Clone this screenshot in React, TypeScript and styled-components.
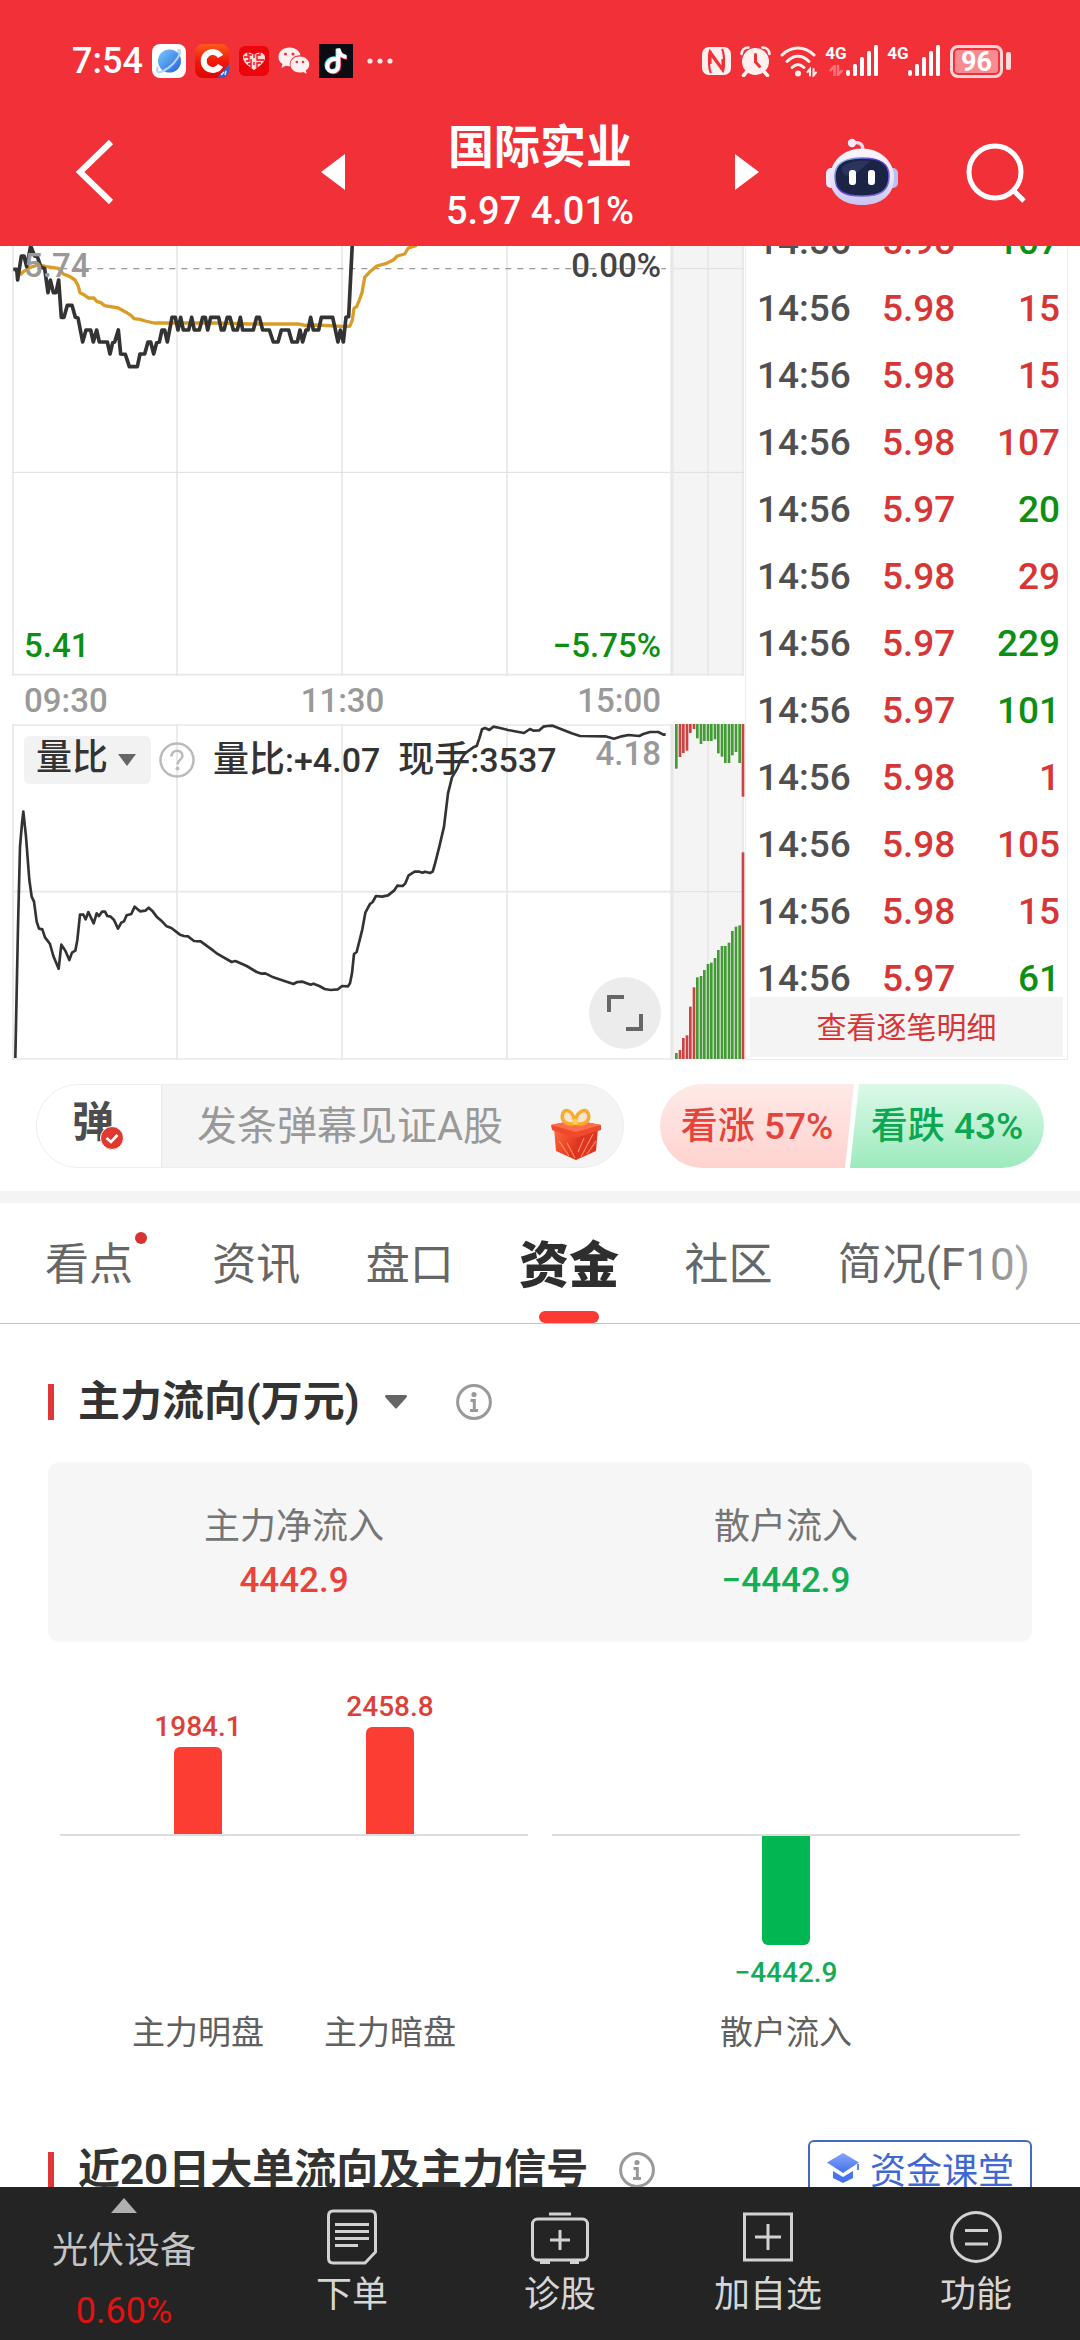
import React from "react";
import styled, { createGlobalStyle } from "styled-components";

const RED = "#f13037";
const UP = "#d63636";
const DOWN = "#0d8f12";

const GlobalStyle = createGlobalStyle`
  * { box-sizing: border-box; }
  body {
    margin: 0;
    background: #fff;
    color: #333;
    font-family: Roboto, "Noto Sans CJK SC", sans-serif;
  }
  button, input, select {
    margin: 0;
    padding: 0;
    border: 0;
    background: none;
    color: inherit;
    font: inherit;
  }
  svg { display: block; flex: none; }
`;

const Screen = styled.div`
  display: flex;
  flex-direction: column;
  height: 100vh;
`;

/* ---------- header ---------- */

const Header = styled.header`
  flex: none;
  background: ${RED};
  color: #fff;
`;

const StatusBar = styled.div`
  display: flex;
  justify-content: space-between;
  align-items: center;
  height: 98px;
  padding: 24px 69px 0 72px;
`;

const StatusGroup = styled.div`
  display: flex;
  align-items: center;
  gap: 9px;
`;

const Clock = styled.span`
  font-size: 36px;
  font-weight: 500;
  line-height: 40px;
`;

const TitleBar = styled.div`
  display: grid;
  grid-template-columns: 1fr auto 1fr;
  align-items: center;
  height: 148px;
  padding: 0 54px 0 76px;
`;

const IconButton = styled.button`
  display: flex;
  align-items: center;
  justify-content: center;
`;

const BackButton = styled(IconButton)`
  justify-self: start;
`;

const Switcher = styled.div`
  display: flex;
  align-items: center;
  justify-content: space-between;
  width: 438px;
  margin-right: 22px;
`;

const StockTitle = styled.h1`
  display: flex;
  flex-direction: column;
  align-items: center;
  margin: 0;
  padding-top: 14px;
  font-size: 46px;
  font-weight: 700;
  line-height: 64px;
`;

const StockQuote = styled.span`
  font-size: 38px;
  font-weight: 500;
  line-height: 64px;
`;

const HeaderActions = styled.div`
  display: flex;
  align-items: center;
  justify-content: flex-end;
  gap: 66px;
`;

/* ---------- quote area ---------- */

const Main = styled.main`
  flex: 1;
  min-height: 0;
  overflow-y: auto;
  scrollbar-width: none;
`;

const QuoteArea = styled.section`
  display: grid;
  grid-template-columns: minmax(0, 733fr) minmax(0, 323fr);
  padding: 0 12px;
`;

const ChartStack = styled.div`
  display: grid;
  & > * { grid-area: 1 / 1; }
`;

const Plot = styled.svg`
  width: 100%;
`;

const PlotLabels = styled.div<{ $top: number; $bottom: number }>`
  display: flex;
  flex-direction: column;
  justify-content: space-between;
  padding: ${(p) => p.$top}px 84px ${(p) => p.$bottom}px 12px;
`;

const LabelRow = styled.div`
  display: flex;
  justify-content: space-between;
`;

const AxisText = styled.span<{ $color: string }>`
  color: ${(p) => p.$color};
  font-size: 33px;
  font-weight: 500;
  line-height: 36px;
`;

const TimeAxis = styled.div`
  display: flex;
  align-items: center;
  justify-content: space-between;
  height: 48px;
  padding: 2px 84px 0 12px;
`;

const IndicatorRow = styled.div`
  display: flex;
  align-items: center;
  height: 48px;
`;

const ChipSelect = styled.span`
  display: grid;
  align-items: center;
  height: 48px;
  border-radius: 6px;
  background: #f2f2f2;
  & > * { grid-area: 1 / 1; }
  & > svg { justify-self: end; margin-right: 15px; pointer-events: none; }
`;

const Select = styled.select`
  appearance: none;
  outline: none;
`;

const IndicatorSelect = styled(Select)`
  padding: 0 42px 3px 12px;
  font-size: 36px;
  font-weight: 500;
  line-height: 45px;
`;

const TitleSelect = styled(Select)`
  padding-right: 47px;
  font-size: 42px;
  font-weight: 700;
  line-height: 60px;
`;

const HelpButton = styled(IconButton)`
  margin: 0 18px 0 8px;
`;

const Reading = styled.span`
  margin-right: 18px;
  font-size: 36px;
  font-weight: 500;
  line-height: 48px;
  white-space: nowrap;
`;

const ReadingValue = styled.span`
  font-size: 34px;
`;

const PeakText = styled(AxisText)`
  align-self: flex-start;
  margin-left: auto;
`;

const ExpandButton = styled(IconButton)`
  align-self: flex-end;
  width: 72px;
  height: 72px;
  border-radius: 50%;
  background: #ececec;
`;

const TickPanel = styled.div`
  display: flex;
  flex-direction: column;
  border: solid #ececec;
  border-width: 0 1px 1px;
  padding: 0 4px 2px;
`;

const TickList = styled.div`
  display: flex;
  flex-direction: column;
  justify-content: flex-end;
  flex: 1 0 auto;
  height: 0;
  overflow: hidden;
`;

const TickTable = styled.table`
  flex: none;
  width: 100%;
  border-collapse: collapse;
  font-size: 37px;
  font-weight: 500;
  line-height: 36px;
`;

const TickCell = styled.td<{ $color: string; $align?: string }>`
  height: 67px;
  padding: 0 3px 0 7px;
  color: ${(p) => p.$color};
  text-align: ${(p) => p.$align ?? "left"};
  vertical-align: bottom;
`;

const TickMore = styled.button`
  flex: none;
  height: 60px;
  padding-bottom: 4px;
  background: #f4f4f4;
  color: ${UP};
  font-size: 30px;
`;

/* ---------- comment bar ---------- */

const CommentBar = styled.section`
  display: grid;
  grid-template-columns: minmax(0, 588fr) minmax(0, 384fr);
  gap: 36px;
  padding: 24px 36px 23px;
`;

const CommentBox = styled.div`
  display: flex;
  align-items: stretch;
  height: 84px;
  border: 1px solid #ededed;
  border-radius: 42px;
  overflow: hidden;
  background: #f4f4f4;
`;

const BarrageToggle = styled.button`
  display: flex;
  align-items: center;
  justify-content: center;
  flex: none;
  width: 125px;
  padding: 0 2px 6px 0;
  border-right: 1px solid #e8e8e8;
  background: #fff;
  color: #4d4d4d;
  font-size: 42px;
  font-weight: 700;
  line-height: 60px;
  & > svg { margin: 30px 0 0 -14px; }
`;

const CommentInput = styled.input`
  flex: 1;
  min-width: 0;
  padding-left: 35px;
  outline: none;
  font-size: 40px;
  &::placeholder { color: #999; opacity: 1; }
`;

const GiftButton = styled(IconButton)`
  padding: 16px 22px 0 0;
`;

const VoteBar = styled.div`
  display: flex;
  height: 84px;
  border-radius: 42px;
  overflow: hidden;
`;

const VoteButton = styled.button<{ $up?: boolean }>`
  flex: 1;
  margin-left: ${(p) => (p.$up ? 0 : -4)}px;
  padding-bottom: 6px;
  background: ${(p) =>
    p.$up
      ? "linear-gradient(#feeae8, #fed3cf)"
      : "linear-gradient(#dcf9e8, #9ceabd)"};
  clip-path: ${(p) =>
    p.$up
      ? "polygon(0 0, 100% 0, calc(100% - 9px) 100%, 0 100%)"
      : "polygon(9px 0, 100% 0, 100% 100%, 0 100%)"};
  color: ${(p) => (p.$up ? "#e4443b" : "#0ca750")};
  font-size: 37px;
  font-weight: 500;
  white-space: nowrap;
`;

/* ---------- tabs ---------- */

const Tabs = styled.nav`
  position: relative;
  display: flex;
  align-items: stretch;
  justify-content: space-between;
  height: 133px;
  padding: 0 50px 0 45px;
  border-top: 12px solid #f4f4f4;
  border-bottom: 1px solid #c4c4c4;
  &::after {
    content: "";
    position: absolute;
    top: 0;
    right: 0;
    bottom: 0;
    width: 130px;
    background: linear-gradient(90deg, rgba(255, 255, 255, 0), rgba(255, 255, 255, 0.8));
    pointer-events: none;
  }
`;

const Tab = styled.button<{ $active?: boolean; $dot?: boolean }>`
  position: relative;
  padding: 0 ${(p) => (p.$dot ? 14 : 0)}px 4px 0;
  color: ${(p) => (p.$active ? "#2e2e2e" : "#666")};
  font-size: ${(p) => (p.$active ? 50 : 44)}px;
  font-weight: ${(p) => (p.$active ? 900 : 400)};
  white-space: nowrap;
  &::before {
    content: "";
    display: ${(p) => (p.$dot ? "block" : "none")};
    position: absolute;
    top: 29px;
    right: 0;
    width: 12px;
    height: 12px;
    border-radius: 50%;
    background: #d93232;
  }
  &::after {
    content: "";
    display: ${(p) => (p.$active ? "block" : "none")};
    position: absolute;
    bottom: 0;
    left: 50%;
    width: 60px;
    height: 12px;
    margin-left: -30px;
    border-radius: 6px;
    background: #fb3b33;
  }
`;

/* ---------- capital flow ---------- */

const Section = styled.section`
  padding: 48px 48px 0;
`;

const SectionHead = styled.div`
  display: flex;
  align-items: center;
  height: 60px;
  &::before {
    content: "";
    width: 6px;
    height: 36px;
    margin-right: 24px;
    background: #e03636;
  }
`;

const SectionTitle = styled.h2`
  margin: 0 31px 0 0;
  font-size: 42px;
  font-weight: 700;
  line-height: 60px;
  white-space: nowrap;
`;

const TitlePicker = styled.span`
  display: grid;
  align-items: center;
  margin-right: 49px;
  & > * { grid-area: 1 / 1; }
  & > svg { justify-self: end; pointer-events: none; }
`;

const Summary = styled.dl`
  display: grid;
  grid-template-columns: 1fr 1fr;
  margin: 30px 0 0;
  padding: 39px 0 35px;
  border-radius: 12px;
  background: #f6f6f6;
  text-align: center;
`;

const SummaryLabel = styled.dt`
  color: #757575;
  font-size: 36px;
  line-height: 53px;
`;

const SummaryValue = styled.dd<{ $color: string }>`
  margin: 0;
  color: ${(p) => p.$color};
  font-size: 35px;
  font-weight: 500;
  line-height: 53px;
`;

const BarCharts = styled.div`
  display: grid;
  grid-template-columns: 1fr 1fr;
  gap: 24px;
  padding: 0 12px;
`;

const BarGroup = styled.div<{ $columns: number }>`
  display: grid;
  grid-template-rows: 192px 2px 175px 44px;
  grid-template-columns: repeat(${(p) => p.$columns}, 1fr);
  padding: 0 42px;
`;

const AxisLine = styled.div`
  grid-row: 2;
  grid-column: 1 / -1;
  margin: 0 -42px;
  background: #dcdcdc;
`;

const BarSlot = styled.div<{ $row: number }>`
  grid-row: ${(p) => p.$row};
  display: flex;
  flex-direction: column;
  align-items: center;
  justify-content: ${(p) => (p.$row === 1 ? "flex-end" : "flex-start")};
`;

const Bar = styled.div<{ $up?: boolean }>`
  width: 48px;
  border-radius: ${(p) => (p.$up ? "6px 6px 0 0" : "0 0 6px 6px")};
  background: ${(p) => (p.$up ? "#fc3d33" : "#02b651")};
`;

const BarValue = styled.span<{ $up?: boolean }>`
  margin-top: ${(p) => (p.$up ? 0 : 8)}px;
  color: ${(p) => (p.$up ? "#dc4037" : "#14ab54")};
  font-size: 28px;
  font-weight: 500;
  line-height: 40px;
`;

const BarName = styled.span`
  grid-row: 4;
  color: #606060;
  font-size: 33px;
  line-height: 44px;
  text-align: center;
`;

const NextHead = styled(SectionHead)`
  margin-top: 85px;
`;

const CourseLink = styled.a`
  display: flex;
  align-items: center;
  justify-content: center;
  gap: 10px;
  height: 60px;
  margin-left: auto;
  padding: 0 16px 4px;
  border: 2px solid #4468c4;
  border-radius: 6px;
  color: #4068d4;
  font-size: 36px;
  text-decoration: none;
  white-space: nowrap;
`;

/* ---------- bottom bar ---------- */

const BottomBar = styled.nav`
  flex: none;
  display: grid;
  grid-template-columns: 248fr 208fr 208fr 208fr 208fr;
  height: 153px;
  background: #242424;
`;

const BottomItem = styled.button`
  display: flex;
  flex-direction: column;
  align-items: center;
  padding-top: 22px;
  color: #d6d6d6;
  font-size: 36px;
  line-height: 60px;
`;

const SectorItem = styled(BottomItem)`
  padding-top: 11px;
  color: #c4c4c4;
`;

const SectorName = styled.span`
  margin-top: 8px;
  line-height: 60px;
`;

const SectorChange = styled.span`
  color: #e01212;
  line-height: 60px;
`;

/* ---------- data ---------- */

const ticks: [string, string, boolean][] = [
  ["5.98", "107", false],
  ["5.98", "15", true],
  ["5.98", "15", true],
  ["5.98", "107", true],
  ["5.97", "20", false],
  ["5.98", "29", true],
  ["5.97", "229", false],
  ["5.97", "101", false],
  ["5.98", "1", true],
  ["5.98", "105", true],
  ["5.98", "15", true],
  ["5.97", "61", false],
];

const upperDepth = [326, 291, 279, 272, 219, 207, 235, 252, 243, 243, 243, 238, 280, 290, 309, 309, 286, 276, 309, 410];
const lowerDepth = [1179, 1170, 1134, 1126, 1040, 982, 952, 948, 930, 912, 908, 894, 870, 858, 858, 848, 813, 800, 796, 577];
const depthColor = (i: number) => ((i > 0 && i < 6) || i === 19 ? "#cb4343" : "#449a35");
const depthX = (i: number) => Math.round(2025 + i * 10.53);

const tabs = [
  { name: "看点", dot: true },
  { name: "资讯" },
  { name: "盘口" },
  { name: "资金", active: true },
  { name: "社区" },
  { name: "简况(F10)" },
];

/* ---------- drawings ---------- */

const Triangle = ({ w, h, d, fill }: { w: number; h: number; d: string; fill: string }) => (
  <svg width={w} height={h} viewBox={`0 0 ${w} ${h}`}>
    <path d={d} fill={fill} />
  </svg>
);

const InfoIcon = () => (
  <svg width="36" height="36" viewBox="0 0 36 36" fill="none" stroke="#999" strokeWidth="3">
    <circle cx="18" cy="18" r="16.4" />
    <circle cx="18" cy="10.5" r="2.6" fill="#999" stroke="none" />
    <path d="M14.5 16.5H18.3V26M14 26.5H22" />
  </svg>
);

const Signal = () => (
  <svg width="33" height="32" viewBox="0 0 33 32" fill="#fff">
    <rect x="0" y="25" width="4" height="6" rx="2" />
    <rect x="7" y="19" width="4" height="12" rx="1.5" />
    <rect x="14" y="12" width="4" height="19" rx="1.5" />
    <rect x="21" y="6" width="4" height="25" rx="1.5" />
    <rect x="28" y="0" width="4" height="31" rx="1.5" />
  </svg>
);

const Network = styled.span`
  display: flex;
  align-items: flex-start;
  font-size: 17px;
  font-weight: 700;
  line-height: 16px;
`;

const NetworkType = styled.span`
  display: flex;
  flex-direction: column;
  align-items: center;
  gap: 4px;
  width: 20px;
`;

const BatteryBody = styled.span`
  display: flex;
  align-items: center;
  gap: 3px;
  &::after {
    content: "";
    width: 5px;
    height: 18px;
    border-radius: 2px;
    background: #ffdadb;
  }
`;

const BatteryLevel = styled.span`
  width: 53px;
  height: 33px;
  border: 3px solid #ffd6d8;
  border-radius: 8px;
  background: #f88b8f;
  background-clip: content-box;
  padding: 2px;
  font-size: 27px;
  font-weight: 700;
  line-height: 24px;
  text-align: center;
`;

const BrowserIcon = () => (
  <svg width="34" height="34" viewBox="0 0 34 34">
    <defs>
      <linearGradient id="globe" x1="0" y1="0" x2="1" y2="1">
        <stop offset="0" stopColor="#7cc9fb" />
        <stop offset="1" stopColor="#1f62dc" />
      </linearGradient>
    </defs>
    <rect width="34" height="34" rx="8" fill="#fff" />
    <path d="M25 6C28 4 30 5 28.500 10L26 15Z" fill="#c5d6f4" />
    <circle cx="17.500" cy="17" r="11.500" fill="url(#globe)" />
    <path d="M6 23C3.500 28.500 6 29.500 11 27C19 23.500 26 15.500 28.500 8" fill="none" stroke="#b7d3fa" strokeWidth="2" />
  </svg>
);

const CIcon = () => (
  <svg width="35" height="34" viewBox="0 0 35 34">
    <defs>
      <linearGradient id="cbg" x1="0" y1="0" x2="0" y2="1">
        <stop offset="0" stopColor="#fb5a1c" />
        <stop offset="0.500" stopColor="#f01a0a" />
        <stop offset="1" stopColor="#dc0505" />
      </linearGradient>
    </defs>
    <rect width="34" height="34" rx="8" fill="url(#cbg)" />
    <path d="M25.500 12.500A9 9 0 1 0 25.500 21.500" fill="none" stroke="#fff" strokeWidth="6" />
    <path d="M34 20V26A8 8 0 0 1 26 34H22Z" fill="#3a5fc4" />
    <path d="M26 31L29 28M30 31L31 27" stroke="#dfe6ff" strokeWidth="1.500" />
  </svg>
);

const HeartIcon = () => (
  <svg width="30" height="30" viewBox="0 0 30 30">
    <rect width="30" height="30" rx="6" fill="#ee040c" />
    <path d="M15 24C9 20 4 16 4 11.500C4 7 10 4 15 9C20 4 26 7 26 11.500C26 16 21 20 15 24Z" fill="#ffd9d9" />
    <path d="M5 11H10V15H7M9 6V9H13M15 9V12M21 6V9H18V14H25M12 13V18H9M12 22V18M18 22V17H22M15 16V19" fill="none" stroke="#ee040c" strokeWidth="1.300" />
  </svg>
);

const WechatIcon = () => (
  <svg width="32" height="28" viewBox="0 0 32 28">
    <path d="M11.500 0.500C5 0.500 0.500 4.500 0.500 10C0.500 13 2 15.500 4.500 17L3.500 21L7.500 18.800C9 19.200 10.500 19.300 12 19.200C10.500 13 16 8 22.500 8.300C21.500 3.500 17 0.500 11.500 0.500Z" fill="#fff0f0" />
    <path d="M21.800 9.500C16.500 9.500 12.500 13 12.500 17.500C12.500 22 16.500 25.500 21.800 25.500C23 25.500 24.200 25.300 25.300 24.900L28.600 26.800L27.800 23.500C30 22 31.300 20 31.300 17.500C31.300 13 27 9.500 21.800 9.500Z" fill="#fff0f0" />
    <g fill={RED}>
      <circle cx="7.500" cy="7" r="1.500" />
      <circle cx="15" cy="7" r="1.500" />
      <circle cx="18.800" cy="15" r="1.300" />
      <circle cx="25" cy="15" r="1.300" />
    </g>
  </svg>
);

const NoteIcon = () => (
  <svg width="34" height="34" viewBox="0 0 34 34">
    <rect width="34" height="34" fill="#0c0b14" />
    <g fill="none" strokeWidth="4">
      <path d="M17 14.500C11.500 13.500 7.500 17 7.500 21.500C7.500 28.500 18.500 29 18.500 21.500V5C19.500 9.500 22 12 26.500 12.300" stroke="#2fe9e4" />
      <path d="M18.500 16C13 15 9 18.500 9 23C9 30 20 30 20 22.500V6C21 10.500 23.500 13.500 28 13.800" stroke="#f8305a" />
      <path d="M17.800 15.300C12.300 14.300 8.300 17.800 8.300 22.300C8.300 29.300 19.300 29.300 19.300 22V4.500C20.300 10 23 12.800 27.500 13" stroke="#fff" />
    </g>
  </svg>
);

const MoreDots = () => (
  <svg width="32" height="6" viewBox="0 0 32 6" fill="#ffe9e9">
    <circle cx="8" cy="3" r="2.600" />
    <circle cx="18" cy="3" r="2.600" />
    <circle cx="28" cy="3" r="2.600" />
  </svg>
);

const NfcIcon = () => (
  <svg width="29" height="28" viewBox="0 0 29 28">
    <rect width="29" height="28" rx="7" fill="#fff0f0" />
    <path d="M9 26C6.500 22 6.500 8 8 4L20.500 22V12M20 2C22.500 6 22.500 20 21 24L8.500 7V17" fill="none" stroke={RED} strokeWidth="2.200" />
  </svg>
);

const AlarmIcon = () => (
  <svg width="31" height="31" viewBox="0 0 31 31">
    <circle cx="15.500" cy="15.500" r="13.500" fill="#fff0f0" />
    <path d="M6.500 26L3.500 29.500M24.500 26L27.500 29.500" stroke="#fff0f0" strokeWidth="3.500" strokeLinecap="round" />
    <path d="M1.500 8C2 4 4.500 1.500 8.500 1.500M22.500 1.500C26.500 1.500 29 4 29.500 8" fill="none" stroke="#fff0f0" strokeWidth="2.600" strokeLinecap="round" />
    <path d="M15.500 8.500V16L19.500 20.500" fill="none" stroke={RED} strokeWidth="3" strokeLinecap="round" />
  </svg>
);

const WifiIcon = () => (
  <svg width="37" height="31" viewBox="0 0 37 31" fill="none" stroke="#fff0f0" strokeWidth="3" strokeLinecap="round">
    <path d="M2 9C11 -0.500 25 -0.500 34 9" />
    <path d="M7 15.500C13.500 8.500 22.500 8.500 29 15.500" />
    <path d="M12 21.500C16 17.500 20 17.500 24 21.500" />
    <circle cx="18" cy="27.500" r="3" fill="#fff0f0" stroke="none" />
    <path d="M30 29.500V23L27.500 26M33.500 23V29.500L36 26.500" strokeWidth="2" />
  </svg>
);

const ArrowsIcon = () => (
  <svg width="14" height="11" viewBox="0 0 14 11" fill="none" stroke="#fb7479" strokeWidth="2.500">
    <path d="M5.500 11V1L1 6M9 0V10L13.500 5" />
  </svg>
);

const RobotIcon = () => (
  <svg width="72" height="68" viewBox="0 0 72 68">
    <defs>
      <linearGradient id="shell" x1="0" y1="0" x2="0" y2="1">
        <stop offset="0" stopColor="#fff6fa" />
        <stop offset="0.600" stopColor="#e4e1fb" />
        <stop offset="1" stopColor="#c9c2f0" />
      </linearGradient>
      <linearGradient id="rim" x1="0" y1="0" x2="1" y2="1">
        <stop offset="0" stopColor="#8be6ee" />
        <stop offset="0.400" stopColor="#5b35d8" />
        <stop offset="1" stopColor="#7a78f0" />
      </linearGradient>
    </defs>
    <rect x="0" y="30" width="12" height="20" rx="5" fill="#f1e9fa" />
    <rect x="60" y="30" width="12" height="20" rx="5" fill="#b9c0f2" />
    <path d="M27 5C33 3.500 37 6 37 12" fill="none" stroke="#f0dcf0" strokeWidth="3.200" />
    <circle cx="26" cy="5" r="4.200" fill="#f4ecfb" />
    <path d="M36 10.500C53 10.500 68 22 68 40C68 57 55 67 36 67C17 67 4 57 4 40C4 22 19 10.500 36 10.500Z" fill="url(#shell)" />
    <path d="M36 20C52 20 63 24 63 38C63 53 55 58 36 58C17 58 9 53 9 38C9 24 20 20 36 20Z" fill="#1c2446" stroke="url(#rim)" strokeWidth="1.500" />
    <path d="M16 29C22 23 34 22 44 23L30 36C22 40 15 38 16 29Z" fill="#34406a" opacity="0.600" />
    <rect x="23" y="32" width="7" height="15" rx="3" fill="#fff" />
    <rect x="42" y="32" width="7" height="15" rx="3" fill="#fff" />
  </svg>
);

const GiftIcon = () => (
  <svg width="50" height="52" viewBox="0 0 50 52">
    <defs>
      <linearGradient id="giftSide" x1="0" y1="0" x2="1" y2="1">
        <stop offset="0" stopColor="#ff6a3d" />
        <stop offset="1" stopColor="#d92a1a" />
      </linearGradient>
    </defs>
    <path d="M3 20L25 28V52L5 43Z" fill="url(#giftSide)" />
    <path d="M47 20L25 28V52L45 43Z" fill="#dd3520" />
    <path d="M8 33L18 48M16 35L24 50M33 30L27 44M42 26L30 49M45 33L36 46" stroke="#f98a55" strokeWidth="1.200" />
    <path d="M0 17L24 12L50 17V22L25 30L1 22Z" fill="#f1492c" />
    <path d="M0 17L24 12L50 17L25 24Z" fill="#fb6e48" />
    <path d="M24 15C16 18 9 13 12 5C15 -1 23 4 24 15C25 4 34 -1 37 5C40 13 33 18 24 15Z" fill="#fbe3cf" stroke="#f8ac2e" strokeWidth="3.500" />
    <circle cx="24.500" cy="14" r="3" fill="#fdcf52" />
  </svg>
);

const CheckBadge = () => (
  <svg width="24" height="24" viewBox="0 0 24 24">
    <circle cx="12" cy="12" r="11.500" fill="#e03a30" stroke="#fff" strokeWidth="1" />
    <path d="M6.500 12L11 16L17.500 9" fill="none" stroke="#fff" strokeWidth="2.600" />
  </svg>
);

const CapIcon = () => (
  <svg width="34" height="32" viewBox="0 0 34 32">
    <defs>
      <linearGradient id="cap" x1="0" y1="0" x2="0" y2="1">
        <stop offset="0" stopColor="#86a6f7" />
        <stop offset="1" stopColor="#4272ee" />
      </linearGradient>
    </defs>
    <path d="M7 19L17 25L27 19V26L17 31L7 26Z" fill="#4674ee" />
    <path d="M17 1L33 10.500L17 21L1 10.500Z" fill="url(#cap)" />
    <path d="M32 12V18" stroke="#5d86f2" strokeWidth="2" />
  </svg>
);

const outline = { fill: "none", stroke: "#d2d2d2", strokeWidth: 3 };

const OrderIcon = () => (
  <svg width="50" height="56" viewBox="0 0 50 56" {...outline}>
    <path d="M6 2H44Q48.500 2 48.500 7V43L38 54H6Q1.500 54 1.500 49V7Q1.500 2 6 2Z" />
    <path d="M8 15.500H42M8 22.500H42M8 29.500H42M8 36.500H31" />
  </svg>
);

const DiagnoseIcon = () => (
  <svg width="58" height="56" viewBox="0 0 58 56" {...outline}>
    <rect x="1.500" y="10" width="55" height="41" rx="5" />
    <path d="M18 5H40M29 21V41M19 31H39M9 53.500H19M39 53.500H48" />
  </svg>
);

const AddIcon = () => (
  <svg width="50" height="56" viewBox="0 0 50 56" {...outline}>
    <path d="M1.500 5H48.500V51H1.500ZM25 15V41M12 28H38" />
  </svg>
);

const FunctionIcon = () => (
  <svg width="52" height="56" viewBox="0 0 52 56" {...outline}>
    <circle cx="26" cy="28" r="24.400" />
    <path d="M15 21.500H38M15 35H38" />
  </svg>
);

const grid = { stroke: "#e8e8e8", strokeWidth: 5, fill: "none" };

/* Both plots use three drawing units per pixel. */
const PricePlot = () => (
  <Plot viewBox="36 18 2199 1290" aria-hidden="true">
    <rect x="2012" y="18" width="220" height="1287" fill="#f4f4f4" />
    <path d="M39 18V1308M531 18V1308M1026 18V1308M1521 18V1308M2124 18V1308M2229 18V1308M36 1304H2232" {...grid} />
    <path d="M36 697H2232M2018 86H2232" {...grid} stroke="#dedede" strokeWidth="3" />
    <path d="M2016 18V1308" {...grid} strokeWidth="10" />
    <path d="M40 86H1998" fill="none" stroke="#999" strokeWidth="4" strokeDasharray="18 18" />
    <path
      d="M60 105L70 95L90 82L115 75L140 80L175 85L190 102L210 110L225 120L234 136L240 158L252 164L265 174H282L290 184L302 188L314 197L355 204L375 215L393 226L402 236L420 238L436 243L462 249H640L700 250L745 252H895L915 256L950 255L1040 260L1050 258L1057 240L1062 205L1070 200L1078 180L1086 158L1094 112L1110 95L1130 78L1160 70L1180 60L1192 48L1214 42L1225 24L1250 16"
      fill="none"
      stroke="#d99c26"
      strokeWidth="10"
      strokeLinejoin="round"
    />
    <path
      d="M40 88H50L53 120L64 48H72L80 80L92 18L104 48L112 50L122 80L134 86L144 158L151 120L160 158H168L176 120L184 232H192L202 196H216L226 232L234 234L248 306L258 270H272L280 306L290 270L298 306H322L330 342L338 308L344 306L355 270L362 342L376 343L388 380H412L420 342H434L444 306H452L461 342L470 308L478 306L486 270H494L502 306L516 232H526L534 270L542 232L550 270H566L575 232L583 270H598L608 232H616L623 270L632 232H656L664 270H672L682 232H690L700 270H712L721 232L728 270H760L770 232H778L788 270H808L820 306H834L844 270H866L876 306H892L900 270L908 306L918 270H924L932 232L940 270H956L964 232H998L1014 306L1021 270L1030 306L1038 232L1046 230L1057 10"
      fill="none"
      stroke="#333"
      strokeWidth="11"
      strokeLinejoin="round"
    />
  </Plot>
);

const VolumePlot = () => (
  <Plot viewBox="36 192 2199 1008" aria-hidden="true">
    <rect x="2012" y="192" width="220" height="1005" fill="#f4f4f4" />
    <path d="M39 192V1200M531 192V1200M1026 192V1200M1521 192V1200M2124 192V1200M2229 192V1200M36 195H2014M36 695H2014M36 1197H2014" {...grid} />
    <path d="M2016 695H2232" {...grid} stroke="#dedede" strokeWidth="3" />
    <path d="M2016 192V1200" {...grid} strokeWidth="10" />
    {upperDepth.map((y, i) => (
      <rect key={i} x={depthX(i)} y="192" width="8" height={y - 192} fill={depthColor(i)} />
    ))}
    {lowerDepth.map((y, i) => (
      <rect key={i} x={depthX(i)} y={y} width="8" height={1197 - y} fill={depthColor(i)} />
    ))}
    <path
      d="M46 1194L54 800L60 560L66 490L70 455L78 530L88 660L95 710L102 725L110 785L117 806L127 808L135 832L150 852L160 888L176 926L184 854L196 872L208 900L216 878L226 872L232 840L240 764H250L257 778L265 756L281 790L290 760L297 768L306 755H315L322 768L332 770L342 780L354 806L364 788L372 784L380 766L394 762L404 740L420 754L436 752L446 743L458 754L470 770L484 782L500 799L514 804L540 824L552 828L564 829L582 843L602 844L640 872L650 880L695 906L706 903L740 918L770 936L785 941L796 940L820 952L880 972L892 966L908 965L932 974L940 971L958 978L974 987L992 990L1014 988L1026 978L1044 979L1050 970L1056 940L1062 882L1070 876L1087 808L1096 758L1110 732L1118 726L1128 708L1146 710L1164 706L1182 692L1192 677L1208 678L1216 670L1226 646L1244 635H1258L1268 638L1275 635L1290 639L1298 635L1304 615L1318 560L1332 500L1344 400L1356 352L1372 325L1382 300L1395 280L1420 262L1430 258L1438 235L1446 208L1455 204L1468 210L1480 200L1500 204L1524 210L1572 219L1590 207L1600 212L1618 211L1630 200L1642 198L1658 197L1690 210L1715 220L1740 228L1816 229L1842 236L1865 229L1885 225L1918 228L1930 222L1950 216H1975L1990 224L1997 223"
      fill="none"
      stroke="#333"
      strokeWidth="8"
      strokeLinejoin="round"
    />
  </Plot>
);

/* ---------- page ---------- */

export default function App() {
  return (
    <Screen>
      <GlobalStyle />
      <Header>
        <StatusBar>
          <StatusGroup>
            <Clock>7:54</Clock>
            <BrowserIcon />
            <CIcon />
            <HeartIcon />
            <WechatIcon />
            <NoteIcon />
            <MoreDots />
          </StatusGroup>
          <StatusGroup>
            <NfcIcon />
            <AlarmIcon />
            <WifiIcon />
            <Network>
              <NetworkType>
                4G
                <ArrowsIcon />
              </NetworkType>
              <Signal />
            </Network>
            <Network>
              <NetworkType>4G</NetworkType>
              <Signal />
            </Network>
            <BatteryBody>
              <BatteryLevel>96</BatteryLevel>
            </BatteryBody>
          </StatusGroup>
        </StatusBar>
        <TitleBar>
          <BackButton aria-label="返回">
            <svg width="38" height="66" viewBox="0 0 38 66">
              <path d="M35 3L4 33L35 63" fill="none" stroke="#fff" strokeWidth="6" />
            </svg>
          </BackButton>
          <Switcher>
            <IconButton aria-label="上一只">
              <Triangle w={24} h={36} d="M24 0V36L0 18Z" fill="#fff" />
            </IconButton>
            <StockTitle>
              国际实业
              <StockQuote>5.97 4.01%</StockQuote>
            </StockTitle>
            <IconButton aria-label="下一只">
              <Triangle w={24} h={36} d="M0 0V36L24 18Z" fill="#fff" />
            </IconButton>
          </Switcher>
          <HeaderActions>
            <IconButton aria-label="智能助手">
              <RobotIcon />
            </IconButton>
            <IconButton aria-label="搜索">
              <svg width="62" height="62" viewBox="0 0 62 62" fill="none" stroke="#fff" strokeWidth="5">
                <circle cx="31" cy="31" r="26" />
                <path d="M49 49L60 60" />
              </svg>
            </IconButton>
          </HeaderActions>
        </TitleBar>
      </Header>

      <Main>
        <QuoteArea>
          <div>
            <ChartStack>
              <PricePlot />
              <PlotLabels $top={2} $bottom={12}>
                <LabelRow>
                  <AxisText $color="#999">5.74</AxisText>
                  <AxisText $color="#444">0.00%</AxisText>
                </LabelRow>
                <LabelRow>
                  <AxisText $color={DOWN}>5.41</AxisText>
                  <AxisText $color={DOWN}>−5.75%</AxisText>
                </LabelRow>
              </PlotLabels>
            </ChartStack>
            <TimeAxis>
              <AxisText $color="#999">09:30</AxisText>
              <AxisText $color="#999">11:30</AxisText>
              <AxisText $color="#999">15:00</AxisText>
            </TimeAxis>
            <ChartStack>
              <VolumePlot />
              <PlotLabels $top={12} $bottom={11}>
                <IndicatorRow>
                  <ChipSelect>
                    <IndicatorSelect aria-label="指标">
                      <option>量比</option>
                    </IndicatorSelect>
                    <Triangle w={18} h={12} d="M0 0H18L9 12Z" fill="#666" />
                  </ChipSelect>
                  <HelpButton aria-label="说明">
                    <svg width="36" height="36" viewBox="0 0 36 36" fill="none" stroke="#bbb" strokeWidth="2.500">
                      <circle cx="18" cy="18" r="16.500" />
                      <path d="M12.500 14.500C12.500 7 23.500 7 23.500 14C23.500 17.500 18.500 18 18.500 22.500" />
                      <circle cx="18.500" cy="26.500" r="2" fill="#bbb" stroke="none" />
                    </svg>
                  </HelpButton>
                  <Reading>
                    量比<ReadingValue>:+4.07</ReadingValue>
                  </Reading>
                  <Reading>
                    现手<ReadingValue>:3537</ReadingValue>
                  </Reading>
                  <PeakText $color="#999">4.18</PeakText>
                </IndicatorRow>
                <ExpandButton aria-label="全屏">
                  <svg width="38" height="38" viewBox="0 0 38 38" fill="none" stroke="#666" strokeWidth="4">
                    <path d="M3 18V3H18M35 20V35H20" />
                  </svg>
                </ExpandButton>
              </PlotLabels>
            </ChartStack>
          </div>
          <TickPanel>
            <TickList>
              <TickTable>
                <tbody>
                  {ticks.map(([price, volume, up], i) => (
                    <tr key={i}>
                      <TickCell $color="#505050">14:56</TickCell>
                      <TickCell $color={UP}>{price}</TickCell>
                      <TickCell $color={up ? UP : DOWN} $align="right">
                        {volume}
                      </TickCell>
                    </tr>
                  ))}
                </tbody>
              </TickTable>
            </TickList>
            <TickMore>查看逐笔明细</TickMore>
          </TickPanel>
        </QuoteArea>

        <CommentBar>
          <CommentBox>
            <BarrageToggle aria-label="弹幕开关">
              弹
              <CheckBadge />
            </BarrageToggle>
            <CommentInput aria-label="发弹幕" placeholder="发条弹幕见证A股" />
            <GiftButton aria-label="礼物">
              <GiftIcon />
            </GiftButton>
          </CommentBox>
          <VoteBar>
            <VoteButton $up>看涨 57%</VoteButton>
            <VoteButton>看跌 43%</VoteButton>
          </VoteBar>
        </CommentBar>

        <Tabs>
          {tabs.map((t) => (
            <Tab key={t.name} $active={t.active} $dot={t.dot}>
              {t.name}
            </Tab>
          ))}
        </Tabs>

        <Section>
          <SectionHead>
            <TitlePicker>
              <TitleSelect aria-label="资金口径">
                <option>主力流向(万元)</option>
              </TitleSelect>
              <Triangle w={22} h={14} d="M1 0H21Q23 1 21 3L12 13Q11 14 10 13L1 3Q-1 1 1 0Z" fill="#666" />
            </TitlePicker>
            <IconButton aria-label="主力流向说明">
              <InfoIcon />
            </IconButton>
          </SectionHead>

          <Summary>
            <div>
              <SummaryLabel>主力净流入</SummaryLabel>
              <SummaryValue $color="#ea4339">4442.9</SummaryValue>
            </div>
            <div>
              <SummaryLabel>散户流入</SummaryLabel>
              <SummaryValue $color="#14ae54">−4442.9</SummaryValue>
            </div>
          </Summary>

          <BarCharts>
            <BarGroup $columns={2}>
              <AxisLine />
              <BarSlot $row={1}>
                <BarValue $up>1984.1</BarValue>
                <Bar $up style={{ height: 87 }} />
              </BarSlot>
              <BarSlot $row={1}>
                <BarValue $up>2458.8</BarValue>
                <Bar $up style={{ height: 107 }} />
              </BarSlot>
              <BarName>主力明盘</BarName>
              <BarName>主力暗盘</BarName>
            </BarGroup>
            <BarGroup $columns={1}>
              <AxisLine />
              <BarSlot $row={3}>
                <Bar style={{ height: 109 }} />
                <BarValue>−4442.9</BarValue>
              </BarSlot>
              <BarName>散户流入</BarName>
            </BarGroup>
          </BarCharts>

          <NextHead>
            <SectionTitle>近20日大单流向及主力信号</SectionTitle>
            <IconButton aria-label="主力信号说明">
              <InfoIcon />
            </IconButton>
            <CourseLink href="#course">
              <CapIcon />
              资金课堂
            </CourseLink>
          </NextHead>
        </Section>
      </Main>

      <BottomBar>
        <SectorItem>
          <Triangle w={26} h={15} d="M13 0L26 15H0Z" fill="#b0b0b0" />
          <SectorName>光伏设备</SectorName>
          <SectorChange>0.60%</SectorChange>
        </SectorItem>
        <BottomItem>
          <OrderIcon />
          下单
        </BottomItem>
        <BottomItem>
          <DiagnoseIcon />
          诊股
        </BottomItem>
        <BottomItem>
          <AddIcon />
          加自选
        </BottomItem>
        <BottomItem>
          <FunctionIcon />
          功能
        </BottomItem>
      </BottomBar>
    </Screen>
  );
}
